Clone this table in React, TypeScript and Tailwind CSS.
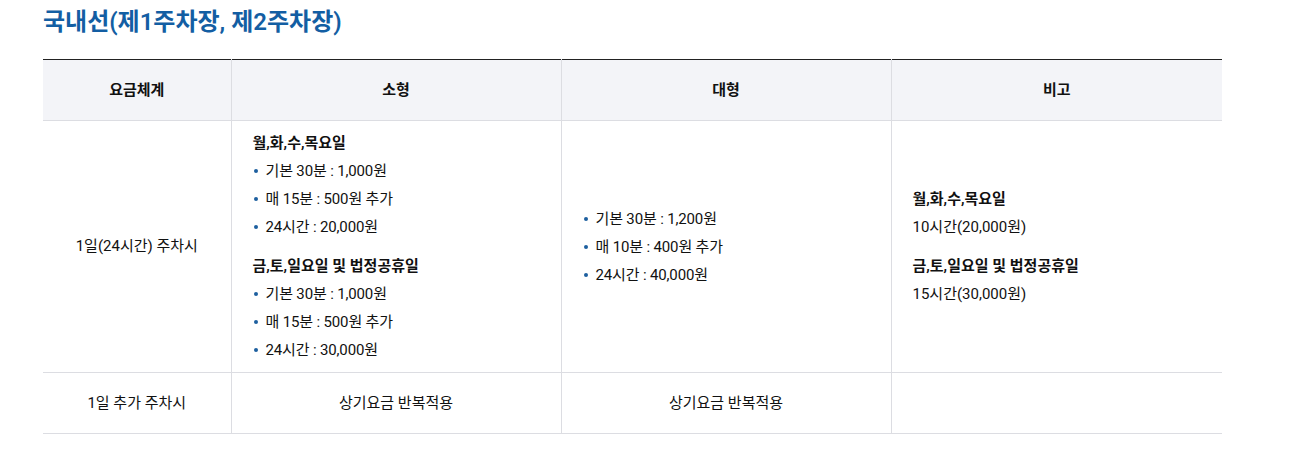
const fontStack = "font-['Roboto','Noto_Sans_CJK_KR',sans-serif]"

type Group = { title?: string; items: string[] }

const smallCar: Group[] = [
  { title: "월,화,수,목요일", items: ["기본 30분 : 1,000원", "매 15분 : 500원 추가", "24시간 : 20,000원"] },
  { title: "금,토,일요일 및 법정공휴일", items: ["기본 30분 : 1,000원", "매 15분 : 500원 추가", "24시간 : 30,000원"] },
]

const largeCar: Group[] = [
  { items: ["기본 30분 : 1,200원", "매 10분 : 400원 추가", "24시간 : 40,000원"] },
]

function BulletGroups({ groups }: { groups: Group[] }) {
  return (
    <div className="flex flex-col gap-[11px]">
      {groups.map((g, i) => (
        <div key={i}>
          {g.title && <p className="font-semibold leading-[28px]">{g.title}</p>}
          <ul>
            {g.items.map((item) => (
              <li key={item} className="flex items-center leading-[28px] tracking-[-0.15px]">
                <span className="mr-[8px] ml-[1px] h-[4px] w-[4px] rounded-full bg-[#1d5f9f]" />
                {item}
              </li>
            ))}
          </ul>
        </div>
      ))}
    </div>
  )
}

export default function App() {
  return (
    <div className={`${fontStack} min-h-screen bg-white px-[43px] pt-[6px] text-[15px] text-[#111]`}>
      <h2 className="text-[24px] leading-[32px] font-semibold text-[#135ea3]">
        국내선(제1주차장, 제2주차장)
      </h2>

      <table className="mt-[21px] w-[1179px] table-fixed border-collapse border-t border-t-[#222]">
        <colgroup>
          <col className="w-[188px]" />
          <col className="w-[330px]" />
          <col className="w-[330px]" />
          <col className="w-[331px]" />
        </colgroup>
        <thead>
          <tr className="h-[61px] bg-[#f3f4f8] border-b border-[#dcdde2]">
            <th className="font-semibold">요금체계</th>
            <th className="border-l border-[#dcdde2] font-semibold">소형</th>
            <th className="border-l border-[#dcdde2] font-semibold">대형</th>
            <th className="border-l border-[#dcdde2] font-semibold">비고</th>
          </tr>
        </thead>
        <tbody>
          <tr className="border-b border-[#dcdde2]">
            <td className="text-center">1일(24시간) 주차시</td>
            <td className="border-l border-[#dcdde2] px-[21px] py-[8px] align-middle">
              <BulletGroups groups={smallCar} />
            </td>
            <td className="border-l border-[#dcdde2] px-[21px] py-[8px] align-middle">
              <BulletGroups groups={largeCar} />
            </td>
            <td className="border-l border-[#dcdde2] px-[21px] py-[8px] align-middle">
              <div className="flex flex-col gap-[11px]">
                <div>
                  <p className="font-semibold leading-[28px]">월,화,수,목요일</p>
                  <p className="leading-[28px]">10시간(20,000원)</p>
                </div>
                <div>
                  <p className="font-semibold leading-[28px]">금,토,일요일 및 법정공휴일</p>
                  <p className="leading-[28px]">15시간(30,000원)</p>
                </div>
              </div>
            </td>
          </tr>
          <tr className="h-[61px] border-b border-[#dcdde2]">
            <td className="text-center">1일 추가 주차시</td>
            <td className="border-l border-[#dcdde2] text-center">상기요금 반복적용</td>
            <td className="border-l border-[#dcdde2] text-center">상기요금 반복적용</td>
            <td className="border-l border-[#dcdde2]"></td>
          </tr>
        </tbody>
      </table>
    </div>
  )
}
